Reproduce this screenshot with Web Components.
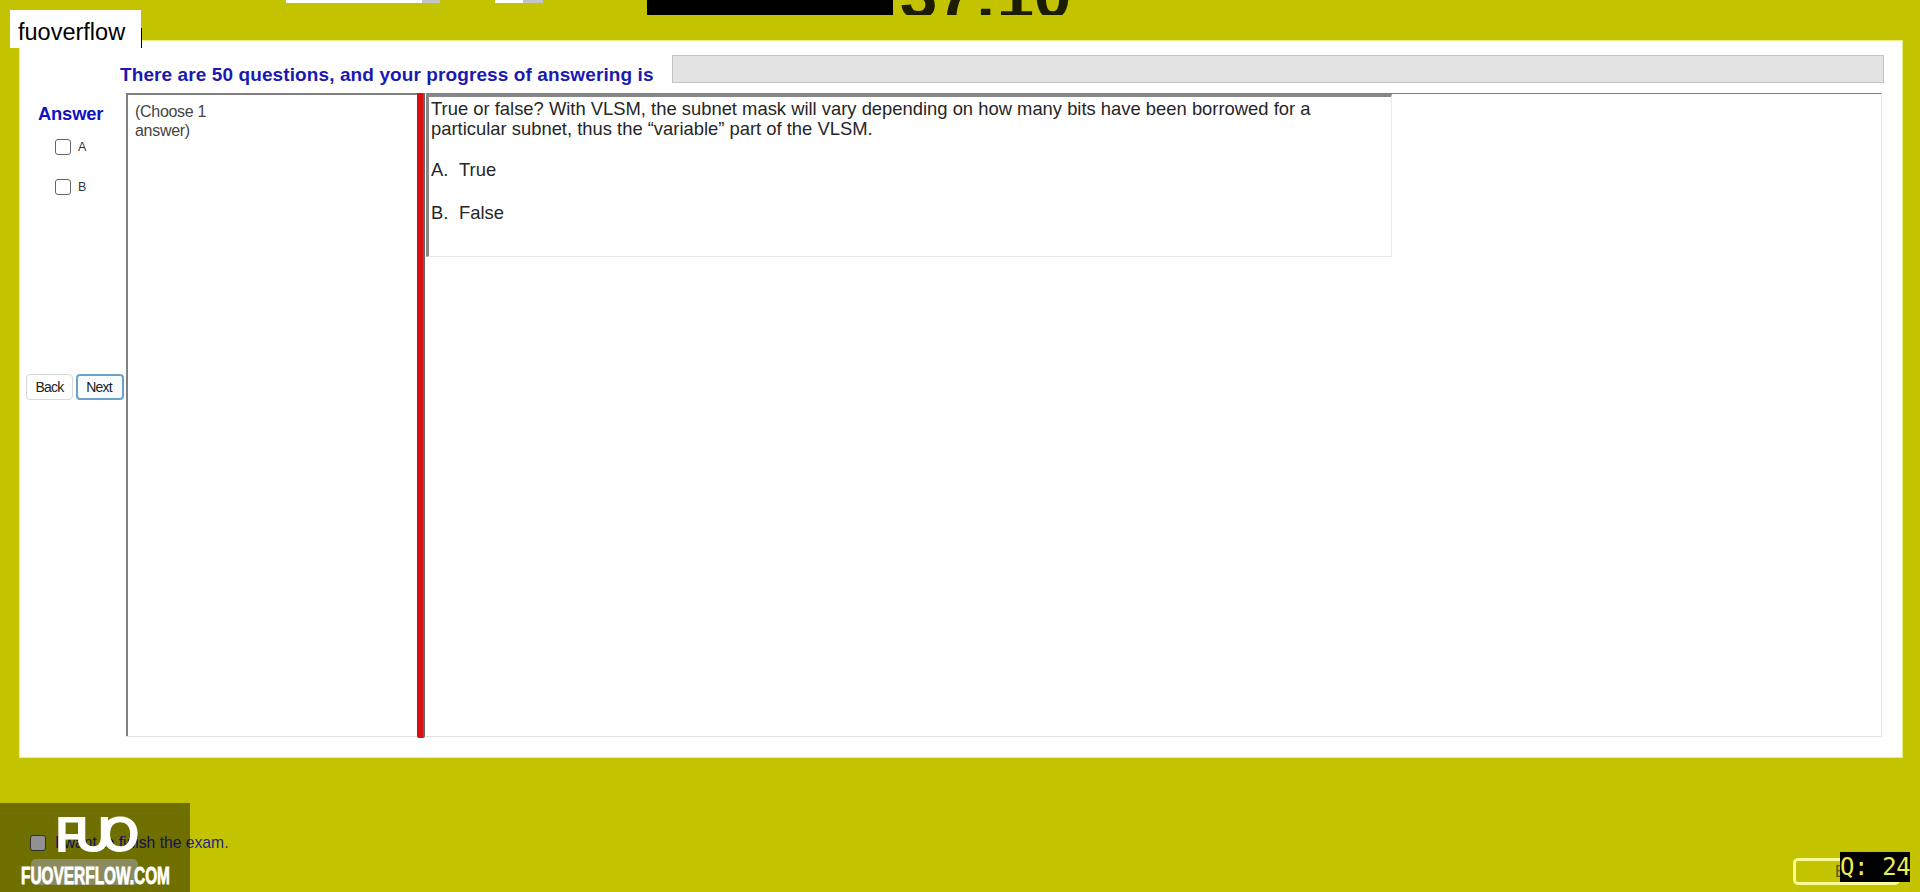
<!DOCTYPE html>
<html>
<head>
<meta charset="utf-8">
<title>Exam</title>
<style>
    html, body { margin: 0; padding: 0; height: 892px; overflow: hidden; background: #c3c300; }
    body { position: relative; font-family: "Liberation Sans", Arial, sans-serif; }
</style>
</head>
<body>
<exam-topbar></exam-topbar>
<exam-panel>
    <answer-column slot="answers"></answer-column>
    <question-table slot="question">
        True or false? With VLSM, the subnet mask will vary depending on how many bits have been borrowed for a particular subnet, thus the “variable” part of the VLSM.
    </question-table>
</exam-panel>
<exam-footer></exam-footer>
<fuo-overlay></fuo-overlay>
<script>
class ExamTopbar extends HTMLElement {
    constructor() {
        super()
        this.attachShadow({ mode: 'open' })
        this.shadowRoot.innerHTML = `
            <style>
                :host { display: flex; height: 41px; overflow: hidden; padding-left: 286px; box-sizing: border-box; }
                .combo { height: 3px; background: #fff; display: flex; justify-content: flex-end; }
                .combo i { display: block; background: #c4c4c4; }
                .one { width: 154px; }
                .one i { width: 18px; }
                .two { width: 48px; margin-left: 55px; }
                .two i { width: 20px; }
                .black { width: 246px; height: 15px; background: #000; margin-left: 104px; }
                .timer {
                    height: 15px; margin-left: 7px; overflow: hidden; position: relative; width: 180px;
                }
                .timer span {
                    position: absolute; left: 0; bottom: -14px; font: bold 67px/68px "Liberation Sans", sans-serif;
                    color: #1c1c00; white-space: nowrap;
                }
            </style>
            <div class="combo one"><i></i></div>
            <div class="combo two"><i></i></div>
            <div class="black"></div>
            <div class="timer"><span>37:10</span></div>
        `
    }
}

class ExamPanel extends HTMLElement {
    constructor() {
        super()
        this.attachShadow({ mode: 'open' })
        this.shadowRoot.innerHTML = `
            <style>
                :host {
                    display: block; box-sizing: border-box; width: 1882px; height: 716px; margin-left: 20px;
                    background: #fff; box-shadow: 0 0 0 1px #eeee88; padding: 14px 18px 20px 6px;
                }
                .head { display: flex; height: 28px; padding-left: 94px; align-items: center; }
                h2 {
                    margin: 11px 0 0; font: bold 19px "Liberation Sans", sans-serif; color: #1a1ab0; letter-spacing: .1px;
                    width: 552px; white-space: nowrap;
                }
                .bar { flex: 1; height: 28px; box-sizing: border-box; background: #e3e3e3; border: 1px solid #c4c4c4; }
                .body { display: flex; height: 644px; margin-top: 10px; }
                ::slotted([slot=answers]) { width: 100px; flex: none; }
                ::slotted([slot=question]) { flex: 1; margin-right: 2px; }
            </style>
            <div class="head">
                <h2>There are 50 questions, and your progress of answering is</h2>
                <div class="bar"></div>
            </div>
            <div class="body">
                <slot name="answers"></slot>
                <slot name="question"></slot>
            </div>
        `
    }
}

class AnswerColumn extends HTMLElement {
    constructor() {
        super()
        this.attachShadow({ mode: 'open' })
        this.shadowRoot.innerHTML = `
            <style>
                :host { display: flex; flex-direction: column; }
                b { font: bold 18.4px/20px "Liberation Sans", sans-serif; letter-spacing: -.2px; color: #1212c0; margin: 11px 0 0 12px; height: 20px; }
                .opt { display: flex; align-items: center; height: 16px; margin-left: 29px; font-size: 12.5px; color: #333; }
                .opt i { width: 14px; height: 14px; border: 1px solid #666; border-radius: 3px; margin-right: 7px; background: #fff; }
                .a { margin-top: 15px; }
                .b { margin-top: 24px; }
                .nav { display: flex; gap: 3px; margin-top: 179px; }
                button {
                    width: 47px; height: 26px; padding: 0; box-sizing: border-box; background: #fff;
                    border: 1px solid #d8d8d8; border-radius: 4px; font: 14px "Liberation Sans", sans-serif;
                    letter-spacing: -.8px; color: #222;
                }
                .next { width: 48px; border: 2px solid #6aa2cc; background: #f8fcff; padding-right: 2px; }
            </style>
            <b>Answer</b>
            <div class="opt a"><i></i>A</div>
            <div class="opt b"><i></i>B</div>
            <div class="nav"><button>Back</button><button class="next">Next</button></div>
        `
    }
}

class QuestionTable extends HTMLElement {
    constructor() {
        super()
        this.attachShadow({ mode: 'open' })
        this.shadowRoot.innerHTML = `
            <style>
                :host { display: flex; height: 644px; box-sizing: border-box; border-bottom: 1px solid #e4e4e4; }
                .choose {
                    width: 291px; box-sizing: border-box; border-left: 2px solid #808080; border-top: 2px solid #808080;
                    padding: 7px 190px 0 7px; font: 16px/19px "Liberation Sans", sans-serif; letter-spacing: -.3px; color: #444;
                }
                .red {
                    width: 8px; height: 645px; background: #dc1010; border-right: 2px solid #666;
                    box-sizing: border-box; border-radius: 0 0 2px 2px; margin-left: 0;
                }
                .right {
                    flex: 1; border-top: 1px solid #808080; border-right: 1px solid #e6e6e6; margin-left: 1px; box-sizing: border-box;
                }
                .box {
                    width: 966px; height: 163px; margin-top: 0; box-sizing: border-box; padding: 2px 0 0 2px;
                    border-left: 3px solid #888; border-top: 3px solid #888; border-right: 1px solid #e8e8e8; border-bottom: 1px solid #e8e8e8;
                    font: 18.4px/21px "Liberation Sans", sans-serif; color: #262626;
                }
                p { margin: 0; }
                .q { width: 900px; line-height: 20px; }
                .o1 { margin-top: 20px; }
                .o2 { margin-top: 22px; }
                p span { display: inline-block; width: 28px; }
            </style>
            <div class="choose">(Choose 1 answer)</div>
            <div class="red"></div>
            <div class="right">
                <div class="box">
                    <p class="q"><slot></slot></p>
                    <p class="o1"><span>A.</span>True</p>
                    <p class="o2"><span>B.</span>False</p>
                </div>
            </div>
        `
    }
}

class ExamFooter extends HTMLElement {
    constructor() {
        super()
        this.attachShadow({ mode: 'open' })
        this.shadowRoot.innerHTML = `
            <style>
                :host {
                    display: flex; justify-content: space-between; align-items: flex-end; box-sizing: border-box;
                    height: 135px; padding: 78px 20px 7px 30px;
                }
                .finish { display: flex; align-items: center; height: 16px; font: 15.7px "Liberation Sans", sans-serif; color: #23238c; }
                .finish i { width: 14px; height: 14px; border: 1px solid #555; border-radius: 3px; background: #fff; margin-right: 9px; }
                .submit { width: 107px; height: 26px; margin: 8px 0 0 1px; border-radius: 5px; background: #f4f4a8; }
                .exit {
                    width: 107px; height: 27px; box-sizing: border-box; border: 3px solid #fbfb9a; border-radius: 5px;
                    font: 16px/21px "Liberation Sans", sans-serif; color: #5a5a10; padding-left: 39px;
                }
            </style>
            <div>
                <div class="finish"><i></i>I want to finish the exam.</div>
                <div class="submit"></div>
            </div>
            <div class="exit">E</div>
        `
    }
}

class FuoOverlay extends HTMLElement {
    constructor() {
        super()
        this.attachShadow({ mode: 'open' })
        this.shadowRoot.innerHTML = `
            <style>
                .tag {
                    position: absolute; left: 10px; top: 10px; width: 131px; height: 38px; background: #fff; box-sizing: border-box;
                    padding: 10px 0 0 8px; font: 23.5px/24px "Liberation Sans", sans-serif; color: #000;
                }
                .tick { position: absolute; left: 141px; top: 28px; width: 1px; height: 20px; background: #000; }
                .shade { position: absolute; left: 0; bottom: 0; width: 190px; height: 89px; background: rgba(0,0,0,.43); }
                .fuo {
                    position: absolute; left: 55px; top: 805px; font: bold 50px/60px "Liberation Sans", sans-serif;
                    letter-spacing: -10.5px; color: #fff;
                }
                .site {
                    position: absolute; left: 21px; top: 864px; font: bold 23px/24px "Liberation Sans", sans-serif;
                    color: #fff; white-space: nowrap; -webkit-text-stroke: .8px #fff; transform: scaleX(.67); transform-origin: left;
                }
                .q {
                    position: absolute; left: 1840px; top: 852px; width: 70px; height: 30px; background: #000; color: #ecec50;
                    font: 24px/30px "DejaVu Sans Mono", monospace; white-space: nowrap; overflow: hidden; letter-spacing: -.4px;
                }
            </style>
            <div class="tag">fuoverflow</div>
            <div class="tick"></div>
            <div class="shade"></div>
            <div class="fuo">FUO</div>
            <div class="site">FUOVERFLOW.COM</div>
            <div class="q">Q: 24</div>
        `
    }
}

window.customElements.define('exam-topbar', ExamTopbar)
window.customElements.define('exam-panel', ExamPanel)
window.customElements.define('answer-column', AnswerColumn)
window.customElements.define('question-table', QuestionTable)
window.customElements.define('exam-footer', ExamFooter)
window.customElements.define('fuo-overlay', FuoOverlay)
</script>
</body>
</html>
